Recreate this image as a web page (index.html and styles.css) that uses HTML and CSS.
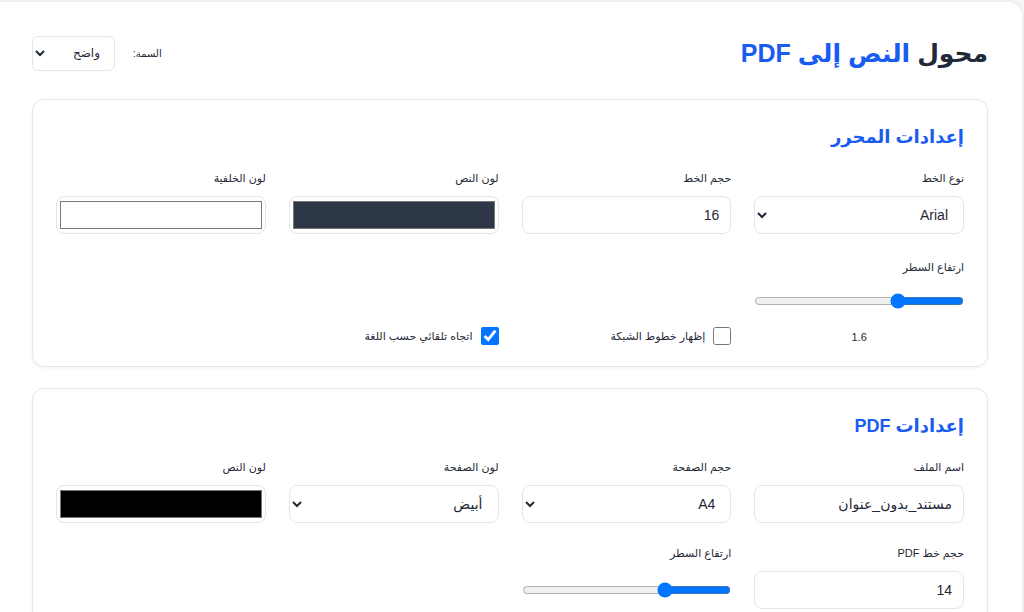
FILE: index.html
```html
<!DOCTYPE html>
<html lang="ar" dir="rtl">
<head>
<meta charset="utf-8">
<title>محول النص إلى PDF</title>
<link rel="stylesheet" href="styles.css">
</head>
<body>
<div class="app">
  <header class="top">
    <h1 class="title">محول <span class="accent">النص إلى PDF</span></h1>
    <div class="theme">
      <label class="theme-label" for="theme">السمة:</label>
      <select id="theme" class="theme-select">
        <option>واضح</option>
        <option>داكن</option>
      </select>
    </div>
  </header>

  <section class="card">
    <h2 class="card-title">إعدادات المحرر</h2>
    <div class="grid">
      <div class="field">
        <label class="lbl">نوع الخط</label>
        <select class="ctl"><option>Arial</option></select>
      </div>
      <div class="field">
        <label class="lbl">حجم الخط</label>
        <input class="ctl" type="number" value="16">
      </div>
      <div class="field">
        <label class="lbl">لون النص</label>
        <input class="ctl color" type="color" value="#2d3748">
      </div>
      <div class="field">
        <label class="lbl">لون الخلفية</label>
        <input class="ctl color" type="color" value="#ffffff">
      </div>
      <div class="field">
        <label class="lbl">ارتفاع السطر</label>
        <input class="range" type="range" min="1" max="3" step="0.1" value="1.6">
        <div class="range-val">1.6</div>
      </div>
      <label class="check">
        <input type="checkbox">
        <span>إظهار خطوط الشبكة</span>
      </label>
      <label class="check">
        <input type="checkbox" checked>
        <span>اتجاه تلقائي حسب اللغة</span>
      </label>
    </div>
  </section>

  <section class="card">
    <h2 class="card-title">إعدادات PDF</h2>
    <div class="grid grid-tight">
      <div class="field">
        <label class="lbl">اسم الملف</label>
        <input class="ctl" type="text" value="مستند_بدون_عنوان">
      </div>
      <div class="field">
        <label class="lbl">حجم الصفحة</label>
        <select class="ctl"><option>A4</option></select>
      </div>
      <div class="field">
        <label class="lbl">لون الصفحة</label>
        <select class="ctl"><option>أبيض</option></select>
      </div>
      <div class="field">
        <label class="lbl">لون النص</label>
        <input class="ctl color" type="color" value="#000000">
      </div>
      <div class="field">
        <label class="lbl">حجم خط PDF</label>
        <input class="ctl" type="number" value="14">
      </div>
      <div class="field">
        <label class="lbl">ارتفاع السطر</label>
        <input class="range range-low" type="range" min="1" max="3" step="0.1" value="1.6">
      </div>
    </div>
  </section>
</div>
</body>
</html>
```

FILE: styles.css
```css
html, body {
  margin: 0;
  padding: 0;
  overflow: hidden;
  background: #f6f6f7;
}
body {
  font-family: "Liberation Sans", "DejaVu Sans", sans-serif;
  color: #1f2937;
}
.app {
  background: #ffffff;
  margin: 2px 2px 0 -20px;
  padding: 29px 34px 0 52px;
  border-radius: 14px 14px 0 0;
  box-shadow: 0 0 4px rgba(0, 0, 0, 0.08);
  min-height: 620px;
}
.top {
  display: flex;
  align-items: center;
  justify-content: space-between;
  height: 44px;
  margin-bottom: 24px;
}
.title {
  margin: 0;
  font-size: 25px;
  font-weight: 700;
  color: #1f2937;
  line-height: 40px;
}
.accent {
  color: #1a5cf0;
}
.theme {
  display: flex;
  align-items: center;
  gap: 18px;
}
.theme-label {
  font-size: 10px;
  color: #1f2937;
}
.theme-select {
  width: 83px;
  height: 35px;
  padding: 0 10px;
  border: 1px solid #e3e5ea;
  border-radius: 6px;
  background: #ffffff;
  font-family: inherit;
  font-size: 12px;
  color: #1f2937;
}
.card {
  border: 1px solid #e5e7eb;
  border-radius: 12px;
  box-shadow: 0 1px 3px rgba(0, 0, 0, 0.06);
  padding: 23px 23px 21px;
  margin-bottom: 21px;
  background: #ffffff;
}
.card-title {
  margin: 0 0 18px;
  font-size: 18px;
  font-weight: 600;
  line-height: 28px;
  color: #1a5cf0;
}
.grid {
  display: grid;
  grid-template-columns: repeat(4, 1fr);
  column-gap: 23px;
  row-gap: 24px;
}
.grid-tight {
  row-gap: 21px;
}
.field {
  display: flex;
  flex-direction: column;
}
.lbl {
  font-size: 11px;
  line-height: 18px;
  margin-bottom: 9px;
  color: #1f2937;
}
.ctl {
  box-sizing: border-box;
  width: 100%;
  height: 38px;
  border: 1px solid #e3e5ea;
  border-radius: 8px;
  background: #ffffff;
  padding: 0 11px;
  font-family: "Liberation Sans", "DejaVu Sans", sans-serif;
  font-size: 14px;
  color: #1f2937;
  margin: 0;
}
.color {
  padding: 0 1px;
  cursor: pointer;
}
.range {
  width: 100%;
  margin: 8px 0 0;
  height: 16px;
}
.range-low {
  margin-top: 11px;
}
.range-val {
  text-align: center;
  font-size: 11px;
  line-height: 16px;
  margin-top: 20px;
}
.check {
  align-self: end;
  display: flex;
  align-items: center;
  gap: 8px;
  font-size: 11px;
  color: #1f2937;
}
.check input {
  width: 18px;
  height: 18px;
  margin: 0;
}
```
